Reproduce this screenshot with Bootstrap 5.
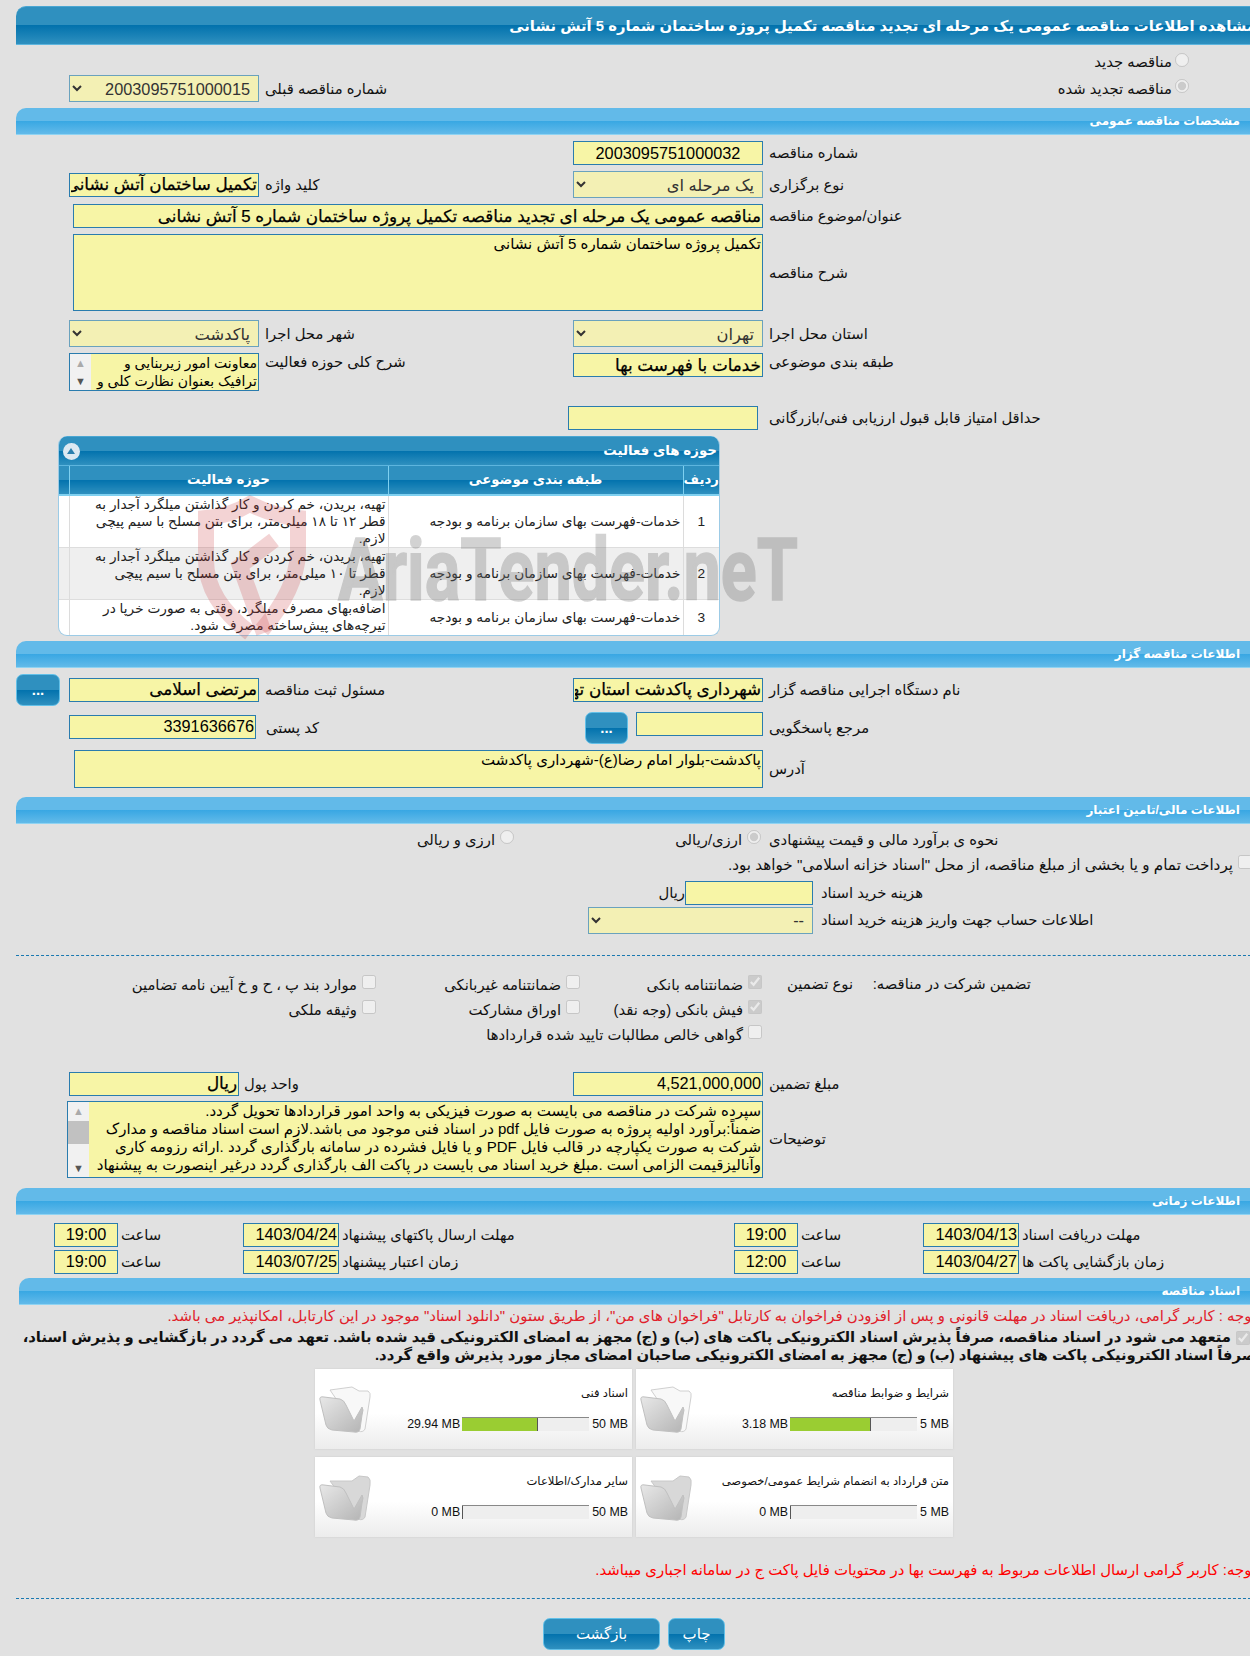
<!DOCTYPE html>
<html lang="fa" dir="rtl">
<head>
<meta charset="utf-8">
<title>مشاهده اطلاعات مناقصه</title>
<link href="https://cdn.jsdelivr.net/npm/bootstrap@5.3.0/dist/css/bootstrap.min.css" rel="stylesheet">
<style>
html,body{background:#e1e1e1;overflow-x:hidden;}
body{font-family:"Liberation Sans","DejaVu Sans",sans-serif;font-size:14.8px;color:#111;line-height:18px;margin:0;width:1250px;height:1656px;overflow:hidden;position:relative;}
.shell{width:1240px;margin-right:-6px;padding-top:6px;}
.bar-dark,.bar-light{color:#fff;font-weight:700;border-radius:0 0 0 0;border-top-left-radius:10px;white-space:nowrap;overflow:hidden;display:flex;align-items:center;}
.bar-dark{background:linear-gradient(#2f90bf 0,#2f90bf 50%,#0272ad 50%,#2f90bf 100%);border-top:1px solid #4aa6d2;border-bottom:1px solid #5db5de;}
.bar-light{background:linear-gradient(#62bae9 0,#62bae9 50%,#38a7e3 50%,#62bae9 100%);height:27px;padding-right:16px;font-size:12px;border-bottom:1px solid #8fd3f2;}
.pagetitle{height:39px;font-size:14.8px;}
.frow{display:flex;align-items:flex-start;}
.lab{text-align:left;flex:none;padding-left:6px;margin:0;}
.lab-a{width:493px;}
.lab-b{width:314px;}
.lab-c{width:498px;padding-left:11px;}
.lab-d{width:443px;padding-left:8px;}
.lab-e{width:334px;padding-left:5px;}
.lab-f{width:317px;padding-left:10px;}
.mid{align-items:center;}
input.tx,.tx{background:#f7f5a6;border:1px solid #2a7cae;border-radius:0;color:#000;padding:0 1px;height:24px;direction:rtl;font-size:16.3px;line-height:22px;flex:none;overflow:hidden;white-space:nowrap;outline:0;}
input.fw{font-weight:400;font-size:16.8px;-webkit-text-stroke:.25px #000;}
input.ltr{text-align:right;}
select.sl{background-color:#f3f0b4;border:1px solid #6aa2bd;border-radius:0;color:#333;height:27px;direction:rtl;font-size:16.3px;padding:0 4px;flex:none;opacity:1;}
.w190{width:190px;}.w187{width:187px;}.w127{width:127px;}.w170{width:170px;}.w690{width:690px;}.w689{width:689px;}.w128{width:128px;}.w225{width:225px;}.w96{width:96px;}.w64{width:64px;}.w696{width:696px;}
input.selfstart{align-self:flex-start;}
input.self3{align-self:flex-start;margin-top:3px;}
.area{white-space:normal;height:auto;font-size:15px;line-height:18px;padding:0 1px;}
.h77{height:77px;}.h38{height:38px;}
.scrollbox{display:flex;flex-direction:row;padding:0;white-space:normal;font-size:14px;line-height:18px;}
.scrollbox15{font-size:15px;}
.sbox-text{flex:1;overflow:hidden;padding:0 1px;}
.fakebar{flex:none;width:21px;background:#f1f1f1;display:flex;flex-direction:column;justify-content:space-between;align-items:center;font-size:11px;line-height:12px;color:#555;padding:3px 0;}
.fakebar i{font-style:normal;}
.fakebar .up{color:#aaa;}
.thumb{width:21px;height:23px;background:#c1c1c1;margin:4px 0 auto;}
.mt1px{margin-top:1px;}.mt2px{margin-top:2px;}.mt5{margin-top:5px;}.mt6{margin-top:6px;}.mt7{margin-top:7px;}.mt9{margin-top:9px;}.mt10{margin-top:10px;}.mt15{margin-top:15px;}
.rad{display:flex;align-items:center;gap:3px;padding-right:67px;}
.pill{width:14px;height:14px;flex:none;margin:0 0 5px;accent-color:#ccc;}
.h24{height:24px;}.h27{height:27px;}.h32{height:32px;}.h20{height:20px;}
.blue-btn{background:linear-gradient(#2f90bf 0,#2f90bf 50%,#0272ad 50%,#2f90bf 100%);border:1px solid #62c0e8;border-radius:7px;color:#fff;padding:0;font-size:15px;flex:none;}
.bt44{width:44px;height:32px;line-height:30px;font-weight:700;margin-right:9px;}
.bt43{width:43px;height:32px;line-height:30px;font-weight:700;margin-right:8px;margin-left:12px;}
.activity{width:662px;margin-right:536px;margin-top:6px;border:1px solid #9ccbe6;border-top:0;border-radius:9px;overflow:hidden;background:#fff;}
.activity .bar-dark{height:30px;border-radius:0;justify-content:space-between;font-size:13.4px;padding:0 2px 0 4px;}
.roundbtn{width:17px;height:17px;border-radius:50%;background:#dce9f2;display:block;position:relative;}
.roundbtn::after{content:"";position:absolute;left:4px;top:5px;border:4.5px solid transparent;border-top:0;border-bottom:6px solid #2b7fae;}
.activity table{margin:0;table-layout:fixed;width:100%;--bs-table-bg:transparent;}
.activity th{background:linear-gradient(#2f90bf 0,#2f90bf 50%,#0272ad 50%,#2f90bf 100%);color:#fff;font-size:13.3px;text-align:center;padding:0;height:29px;border:0;border-left:1px solid #7fd0f0;vertical-align:middle;border-bottom:2px solid #7fd0f0;}
.activity td{font-size:13.7px;line-height:17px;padding:0 2px;border:0;border-left:1px solid #dcdcdc;vertical-align:middle;color:#222;}
.activity td.wrapcell{padding-left:21px;}
.activity tr.alt td{background:#efefef;border-top:1px solid #ddd;border-bottom:1px solid #ddd;}
.tr52{height:52px;}.tr36{height:35px;}
.activity tr.alt{height:51px;}
.c1{width:36px;text-align:center;}.c2{width:295px;}.c3{width:319px;}.c4{width:12px;}
.rad2{display:flex;align-items:center;gap:5px;flex:none;}
.rad-a{width:249px;padding-right:2px;}
.pay{padding-right:4px;font-size:15.2px;white-space:nowrap;}
.ck{display:flex;align-items:center;gap:5px;flex:none;white-space:nowrap;height:20px;}
.gridg{display:grid;grid-template-columns:182px 204px auto;justify-content:start;row-gap:5px;}
.dash{border-top:1px dashed #1978b0;height:0;}
.gap22{margin-top:21px;}
.gtop{margin-top:19px;padding-right:225px;}
.gtitle{width:178px;flex:none;white-space:nowrap;}
.gtype{width:91px;flex:none;white-space:nowrap;}
.gamt{margin-top:27px;}
.tfirst{margin-top:8px;}
.tnext{margin-top:3px;}
.tlab{flex:none;padding-left:3px;text-align:left;margin:0;}
.tl1{width:237px;}
.tl2{width:125px;}
.tl3{width:395px;}
.barlast{margin-top:4px;}
.bar-indent{margin-left:3px;}
.redline{margin-top:2px;}
.red1{color:#e0202a;font-size:14.9px;white-space:nowrap;}
.red2{color:#f00;font-size:14.9px;white-space:nowrap;}
.strong{font-weight:700;font-size:14.8px;line-height:18px;white-space:nowrap;margin-top:3px;}
.strong .pill{vertical-align:middle;margin:0 6px 0 5px;}
.cardrow{display:flex;gap:4px;margin-right:303px;}
.cr1{margin-top:5px;}
.cr2{margin-top:8px;}
.fcard{width:317px;height:80px;background:linear-gradient(#fff 0,#fff 55%,#ececec 100%);box-shadow:0 0 2px #ccc;position:relative;padding:15px 4px 0 0;flex:none;}
.ftitle{font-size:11.6px;text-align:right;height:24px;line-height:18px;}
.meter{display:flex;align-items:center;font-size:12.4px;height:14px;margin-top:9px;}
.meter .hi{flex:none;padding-left:3px;white-space:nowrap;}
.meter .lo{padding-right:2px;white-space:nowrap;}
.track{height:14px;background:#eee;flex:none;border-top:1px solid #888;direction:ltr;width:127px;}
.fill{height:13px;background:#9acd32;border-right:1px solid #555;}
.folder{position:absolute;left:3px;top:16px;}
.redbottom{margin-top:24px;}
.dashb{margin-top:19px;}
.footbtn{display:flex;justify-content:center;gap:8px;margin-top:19px;padding-right:4px;}
.btn-back{width:117px;height:32px;line-height:30px;}
.btn-print{width:57px;height:32px;line-height:30px;}
.spacer53{width:53px;display:block;}
.wm{position:absolute;left:190px;top:490px;pointer-events:none;}
</style>
</head>
<body>
<div class="shell">
  <div class="bar-dark pagetitle">مشاهده اطلاعات مناقصه عمومی یک مرحله ای تجدید مناقصه تکمیل پروژه ساختمان شماره 5 آتش نشانی</div>

  <div class="frow mid h24 mt5"><div class="rad"><input type="radio" class="pill" disabled><span>مناقصه جدید</span></div></div>
  <div class="frow mid h27 mt1px">
    <div class="rad"><input type="radio" class="pill" disabled checked><span>مناقصه تجدید شده</span></div>
    <div class="me-auto d-flex align-items-center">
      <label class="lab">شماره مناقصه قبلی</label>
      <select class="sl w190" disabled><option>2003095751000015</option></select>
      <span class="spacer53"></span>
    </div>
  </div>

  <div class="bar-light mt6">مشخصات مناقصه عمومی</div>
  <div class="frow mid mt6"><label class="lab lab-a">شماره مناقصه</label><input class="tx w190 text-center" value="2003095751000032" readonly></div>
  <div class="frow mid mt6 h27"><label class="lab lab-a">نوع برگزاری</label><select class="sl w190" disabled><option>یک مرحله ای</option></select><label class="lab lab-b">کلید واژه</label><input class="tx fw w190" value="تکمیل ساختمان آتش نشانی" readonly></div>
  <div class="frow mid mt6"><label class="lab lab-a">عنوان/موضوع مناقصه</label><input class="tx fw w690" value="مناقصه عمومی یک مرحله ای تجدید مناقصه تکمیل پروژه ساختمان شماره 5 آتش نشانی" readonly></div>
  <div class="frow mid mt6"><label class="lab lab-a">شرح مناقصه</label><div class="tx area w690 h77">تکمیل پروژه ساختمان شماره 5 آتش نشانی</div></div>
  <div class="frow mid mt9"><label class="lab lab-a">استان محل اجرا</label><select class="sl w190" disabled><option>تهران</option></select><label class="lab lab-b">شهر محل اجرا</label><select class="sl w190" disabled><option>پاکدشت</option></select></div>
  <div class="frow mt6"><label class="lab lab-a">طبقه بندی موضوعی</label><input class="tx fw w190" value="خدمات با فهرست بها" readonly><label class="lab lab-b">شرح کلی حوزه فعالیت</label>
    <div class="tx scrollbox w190 h38"><div class="sbox-text">معاونت امور زیربنایی و ترافیک بعنوان نظارت کلی و</div><div class="fakebar"><i class="up">▲</i><i>▼</i></div></div></div>
  <div class="frow mid mt15"><label class="lab lab-c">حداقل امتیاز قابل قبول ارزیابی فنی/بازرگانی</label><input class="tx w190" readonly></div>

  <div class="activity">
    <div class="bar-dark"><span>حوزه های فعالیت</span><span class="roundbtn"></span></div>
    <table class="table">
      <thead><tr><th class="c1">ردیف</th><th class="c2">طبقه بندی موضوعی</th><th class="c3">حوزه فعالیت</th><th class="c4"></th></tr></thead>
      <tbody>
        <tr class="tr52"><td class="text-center">1</td><td>خدمات-فهرست بهای سازمان برنامه و بودجه</td><td class="wrapcell">تهیه، بریدن، خم کردن و کار گذاشتن میلگرد آجدار به قطر ۱۲ تا ۱۸ میلی‌متر، برای بتن مسلح با سیم پیچی لازم.</td><td></td></tr>
        <tr class="alt"><td class="text-center">2</td><td>خدمات-فهرست بهای سازمان برنامه و بودجه</td><td class="wrapcell">تهیه، بریدن، خم کردن و کار گذاشتن میلگرد آجدار به قطر تا ۱۰ میلی‌متر، برای بتن مسلح با سیم پیچی لازم.</td><td></td></tr>
        <tr class="tr36"><td class="text-center">3</td><td>خدمات-فهرست بهای سازمان برنامه و بودجه</td><td class="wrapcell">اضافه‌بهای مصرف میلگرد، وقتی به صورت خرپا در تیرچه‌های پیش‌ساخته مصرف شود.</td><td></td></tr>
      </tbody>
    </table>
  </div>

  <div class="bar-light mt5">اطلاعات مناقصه گزار</div>
  <div class="frow mid mt6 h32"><label class="lab lab-a">نام دستگاه اجرایی مناقصه گزار</label><input class="tx fw w190" value="شهرداری پاکدشت استان تهران" readonly><label class="lab lab-b">مسئول ثبت مناقصه</label><input class="tx fw w190" value="مرتضی اسلامی" readonly><button class="blue-btn bt44" type="button">...</button></div>
  <div class="frow mid mt6 h32"><label class="lab lab-a">مرجع پاسخگویی</label><input class="tx w127 selfstart" readonly><button class="blue-btn bt43" type="button">...</button><label class="lab lab-f">کد پستی</label><input class="tx w187 text-end self3" value="3391636676" readonly></div>
  <div class="frow mid mt6"><label class="lab lab-a">آدرس</label><div class="tx area w689 h38">پاکدشت-بلوار امام رضا(ع)-شهرداری پاکدشت</div></div>

  <div class="bar-light mt9">اطلاعات مالی/تامین اعتبار</div>
  <div class="frow mid mt6 h20"><label class="lab lab-a">نحوه ی برآورد مالی و قیمت پیشنهادی</label><div class="rad2 rad-a"><input type="radio" class="pill" disabled checked><span>ارزی/ریالی</span></div><div class="rad2"><input type="radio" class="pill" disabled><span>ارزی و ریالی</span></div></div>
  <div class="frow mid mt5 h20"><div class="rad2 pay"><input type="checkbox" class="pill" disabled><span>پرداخت تمام و یا بخشی از مبلغ مناقصه، از محل "اسناد خزانه اسلامی" خواهد بود.</span></div></div>
  <div class="frow mid mt6"><label class="lab lab-d">هزینه خرید اسناد</label><input class="tx w128" readonly><span>ریال</span></div>
  <div class="frow mid mt2px"><label class="lab lab-d">اطلاعات حساب جهت واریز هزینه خرید اسناد</label><select class="sl w225" disabled><option>--</option></select></div>
  <div class="dash gap22"></div>

  <div class="frow gtop">
    <div class="gtitle">تضمین شرکت در مناقصه:</div>
    <div class="gtype">نوع تضمین</div>
    <div class="gridg">
      <div class="ck"><input type="checkbox" class="pill" disabled checked><span>ضمانتنامه بانکی</span></div>
      <div class="ck"><input type="checkbox" class="pill" disabled><span>ضمانتنامه غیربانکی</span></div>
      <div class="ck"><input type="checkbox" class="pill" disabled><span>موارد بند پ ، ح و خ آیین نامه تضامین</span></div>
      <div class="ck"><input type="checkbox" class="pill" disabled checked><span>فیش بانکی (وجه نقد)</span></div>
      <div class="ck"><input type="checkbox" class="pill" disabled><span>اوراق مشارکت</span></div>
      <div class="ck"><input type="checkbox" class="pill" disabled><span>وثیقه ملکی</span></div>
      <div class="ck"><input type="checkbox" class="pill" disabled><span>گواهی خالص مطالبات تایید شده قراردادها</span></div>
    </div>
  </div>

  <div class="frow mid gamt"><label class="lab lab-a">مبلغ تضمین</label><input class="tx w190 ltr" value="4,521,000,000" readonly><label class="lab lab-e">واحد پول</label><input class="tx fw w170" value="ریال" readonly></div>
  <div class="frow mid mt5"><label class="lab lab-a">توضیحات</label>
    <div class="tx scrollbox scrollbox15 w696 h77"><div class="sbox-text">سپرده شرکت در مناقصه می بایست به صورت فیزیکی به واحد امور قراردادها تحویل گردد.<br>ضمناً:برآورد اولیه پروژه به صورت فایل pdf  در اسناد فنی موجود می باشد.لازم است اسناد مناقصه و مدارک<br>شرکت به صورت یکپارچه در قالب فایل PDF  و یا  فایل فشرده در سامانه بارگذاری گردد .ارائه رزومه کاری<br>وآنالیزقیمت الزامی است .مبلغ خرید اسناد می بایست در پاکت الف بارگذاری گردد درغیر اینصورت به پیشنهاد</div><div class="fakebar"><i class="up">▲</i><span class="thumb"></span><i>▼</i></div></div></div>

  <div class="bar-light mt10">اطلاعات زمانی</div>
  <div class="frow mid tfirst">
    <label class="tlab tl1">مهلت دریافت اسناد</label><input class="tx w96" value="1403/04/13" readonly><label class="tlab tl2">ساعت</label><input class="tx w64 text-center" value="19:00" readonly>
    <label class="tlab tl3">مهلت ارسال پاکتهای پیشنهاد</label><input class="tx w96" value="1403/04/24" readonly><label class="tlab tl2">ساعت</label><input class="tx w64 text-center" value="19:00" readonly>
  </div>
  <div class="frow mid tnext">
    <label class="tlab tl1">زمان بازگشایی پاکت ها</label><input class="tx w96" value="1403/04/27" readonly><label class="tlab tl2">ساعت</label><input class="tx w64 text-center" value="12:00" readonly>
    <label class="tlab tl3">زمان اعتبار پیشنهاد</label><input class="tx w96" value="1403/07/25" readonly><label class="tlab tl2">ساعت</label><input class="tx w64 text-center" value="19:00" readonly>
  </div>

  <div class="bar-light bar-indent barlast">اسناد مناقصه</div>
  <div class="red1 redline">توجه : کاربر گرامی، دریافت اسناد در مهلت قانونی و پس از افزودن فراخوان به کارتابل "فراخوان های من"، از طریق ستون "دانلود اسناد" موجود در این کارتابل، امکانپذیر می باشد.</div>
  <div class="strong"><input type="checkbox" class="pill" disabled checked>متعهد می شود در اسناد مناقصه، صرفاً پذیرش اسناد الکترونیکی پاکت های (ب) و (ج) مجهز به امضای الکترونیکی قید شده باشد. تعهد می گردد در بازگشایی و پذیرش اسناد،<br>صرفاً اسناد الکترونیکی پاکت های پیشنهاد (ب) و (ج) مجهز به امضای الکترونیکی صاحبان امضای مجاز مورد پذیرش واقع گردد.</div>

  <div class="cardrow cr1">
    <div class="fcard"><div class="ftitle">شرایط و ضوابط مناقصه</div><div class="meter"><span class="hi" dir="ltr">5 MB</span><div class="track"><div class="fill" style="width:64%"></div></div><span class="lo" dir="ltr">3.18 MB</span></div>
      <svg class="folder" width="56" height="50" viewBox="0 0 56 50"><defs><linearGradient id="fg" x1="0" y1="0" x2="1" y2="1"><stop offset="0" stop-color="#e8e8e8"/><stop offset="1" stop-color="#b4b4b4"/></linearGradient></defs><path d="M12 5 L34 2 L41 6 L50 6 Q53 8 52 12 L47 44 Q45 48 40 46 Z" fill="#f8f8f8" stroke="#d0d0d0"/><path d="M2 15 Q1 11 6 12 L22 14 Q26 15 28 20 L36 36 L44 22 Q46 24 44 30 L42 44 Q41 48 36 47 L14 45 Q9 44 8 40 Z" fill="url(#fg)" stroke="#c0c0c0"/></svg></div>
    <div class="fcard"><div class="ftitle">اسناد فنی</div><div class="meter"><span class="hi" dir="ltr">50 MB</span><div class="track"><div class="fill" style="width:60%"></div></div><span class="lo" dir="ltr">29.94 MB</span></div>
      <svg class="folder" width="56" height="50" viewBox="0 0 56 50"><path d="M12 5 L34 2 L41 6 L50 6 Q53 8 52 12 L47 44 Q45 48 40 46 Z" fill="#f8f8f8" stroke="#d0d0d0"/><path d="M2 15 Q1 11 6 12 L22 14 Q26 15 28 20 L36 36 L44 22 Q46 24 44 30 L42 44 Q41 48 36 47 L14 45 Q9 44 8 40 Z" fill="url(#fg)" stroke="#c0c0c0"/></svg></div>
  </div>
  <div class="cardrow cr2">
    <div class="fcard"><div class="ftitle">متن قرارداد به انضمام شرایط عمومی/خصوصی</div><div class="meter"><span class="hi" dir="ltr">5 MB</span><div class="track"><div class="fill" style="width:1px"></div></div><span class="lo" dir="ltr">0 MB</span></div>
      <svg class="folder" width="56" height="50" viewBox="0 0 56 50"><path d="M12 8 L34 8 L41 3 L50 4 Q53 6 52 12 L47 44 Q45 48 40 46 Z" fill="#d8d8d8" stroke="#c8c8c8"/><path d="M2 15 Q1 11 6 12 L22 14 Q26 15 28 20 L36 36 L44 22 Q46 24 44 30 L42 44 Q41 48 36 47 L14 45 Q9 44 8 40 Z" fill="url(#fg)" stroke="#c0c0c0"/></svg></div>
    <div class="fcard"><div class="ftitle">سایر مدارک/اطلاعات</div><div class="meter"><span class="hi" dir="ltr">50 MB</span><div class="track"><div class="fill" style="width:1px"></div></div><span class="lo" dir="ltr">0 MB</span></div>
      <svg class="folder" width="56" height="50" viewBox="0 0 56 50"><path d="M12 8 L34 8 L41 3 L50 4 Q53 6 52 12 L47 44 Q45 48 40 46 Z" fill="#d8d8d8" stroke="#c8c8c8"/><path d="M2 15 Q1 11 6 12 L22 14 Q26 15 28 20 L36 36 L44 22 Q46 24 44 30 L42 44 Q41 48 36 47 L14 45 Q9 44 8 40 Z" fill="url(#fg)" stroke="#c0c0c0"/></svg></div>
  </div>

  <div class="red2 redbottom">توجه: کاربر گرامی ارسال اطلاعات مربوط به فهرست بها در محتویات فایل پاکت ج در سامانه اجباری میباشد.</div>
  <div class="dash dashb"></div>
  <div class="footbtn"><button class="blue-btn btn-print" type="button">چاپ</button><button class="blue-btn btn-back" type="button">بازگشت</button></div>
</div>

<svg class="wm" width="620" height="160" viewBox="0 0 620 160" dir="ltr">
  <path d="M60 143 Q16 110 16 70 L16 28 Q40 26 60 14 Q84 26 108 28 L108 64 Q106 100 72 140" fill="none" stroke="#c8383a" stroke-width="16" opacity=".22"/>
  <path d="M84 50 L50 76 L74 143" fill="none" stroke="#c8383a" stroke-width="16" opacity=".22"/>
  <text x="148" y="110" font-family="Roboto,'Liberation Sans',sans-serif" font-weight="700" font-size="88" fill="#777" stroke="#777" stroke-width="1.5" opacity=".32" textLength="460" lengthAdjust="spacingAndGlyphs" direction="ltr">AriaTender.neT</text>
</svg>
</body>
</html>
